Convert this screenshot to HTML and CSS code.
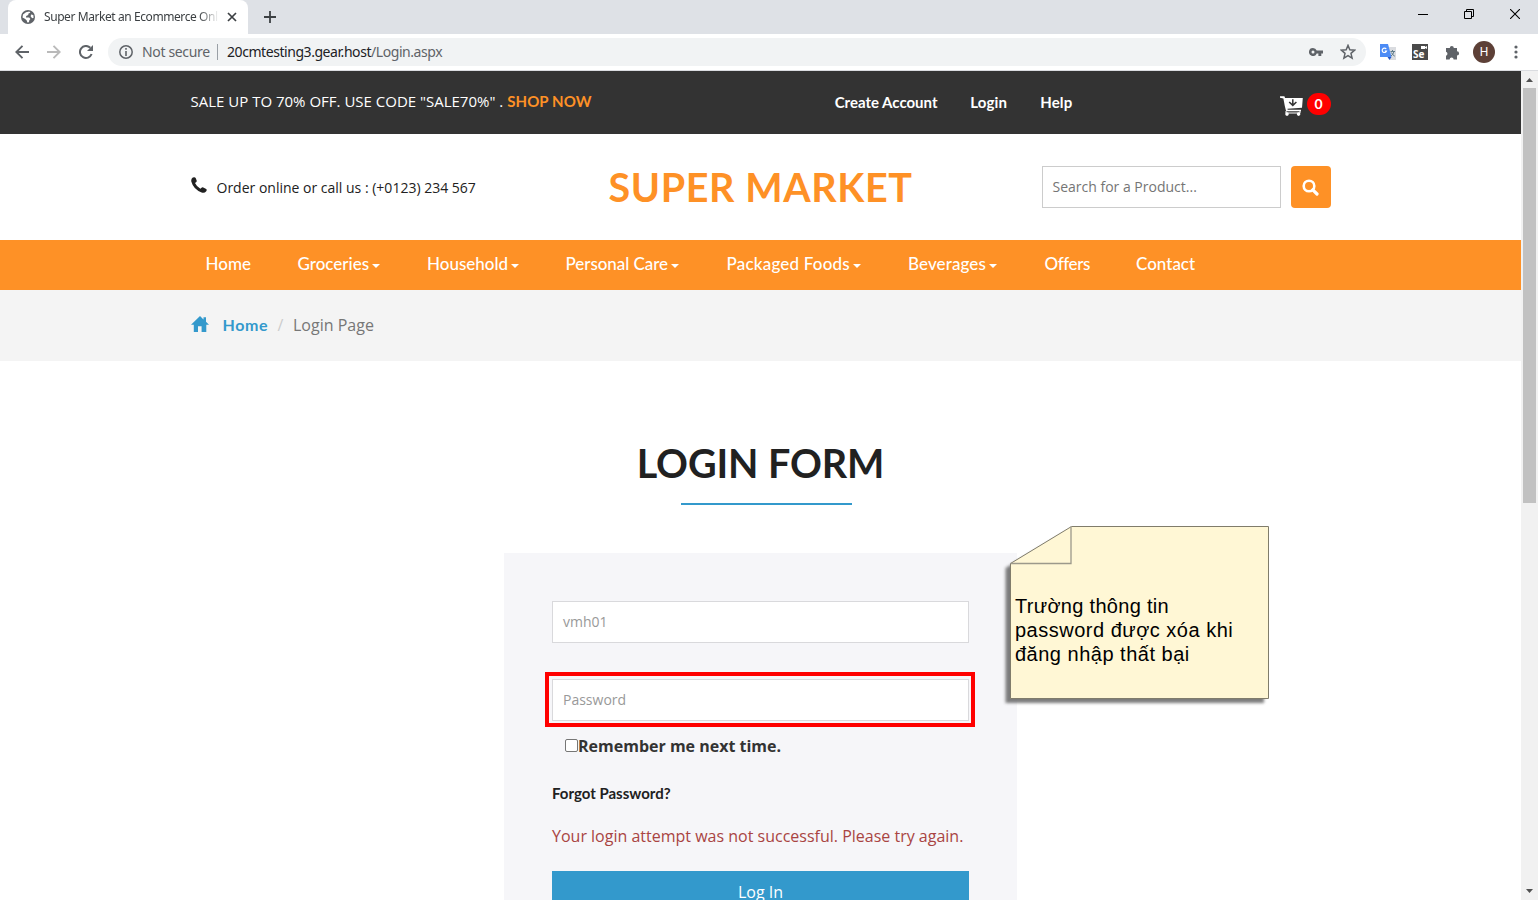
FILE: index.html
```html
<!DOCTYPE html>
<html lang="en">
<head>
<meta charset="utf-8">
<title>Super Market an Ecommerce Online Shopping</title>
<link rel="stylesheet" href="styles.css">
</head>
<body>
<div class="browser">
  <div class="tabstrip">
    <div class="tab">
      <svg class="globe" width="14" height="14" viewBox="0 0 14 14"><circle cx="7" cy="7" r="7" fill="#5f6368"/><path d="M2 4.5 5 2.2 8.3 1.5 9.4 2.7 7.5 3.6 7.2 5 5.2 6 5 7.4 8.2 7.4 9.4 9 8.2 10.4 8 12.3 6.4 12.6 5.6 10.2 3.8 8.8 1.5 7.4ZM10 4.6 12.3 5 12.6 7.8 11.2 8.2 9.7 6.6Z" fill="#fff"/></svg>
      <span class="tab-title">Super Market an Ecommerce Onl</span>
      <svg class="tab-close" width="10" height="10" viewBox="0 0 10 10"><path d="M1 1 9 9M9 1 1 9" stroke="#3c4043" stroke-width="1.7"/></svg>
    </div>
    <svg class="new-tab" width="12" height="12" viewBox="0 0 12 12"><path d="M6 0V12M0 6H12" stroke="#3c4043" stroke-width="1.8"/></svg>
    <div class="window-buttons">
      <svg width="10" height="10" viewBox="0 0 10 10"><path d="M0 5.5H10" stroke="#000"/></svg>
      <svg width="10" height="10" viewBox="0 0 10 10"><path d="M.5 2.5H7.5V9.5H.5ZM2.5 2.5V.5H9.5V7.5H7.5" fill="none" stroke="#000"/></svg>
      <svg width="10" height="10" viewBox="0 0 10 10"><path d="M0 0 10 10M10 0 0 10" stroke="#000" stroke-width="1.1"/></svg>
    </div>
  </div>
  <div class="toolbar">
    <svg class="back" width="14" height="14" viewBox="0 0 14 14"><path d="M14 7H1.5M7.5.8 1.3 7 7.5 13.2" fill="none" stroke="#5f6368" stroke-width="1.9"/></svg>
    <svg class="forward" width="14" height="14" viewBox="0 0 14 14"><path d="M0 7H12.5M6.5.8 12.7 7 6.5 13.2" fill="none" stroke="#bababa" stroke-width="1.9"/></svg>
    <svg class="reload" width="14" height="14" viewBox="0 0 14 14"><path d="M12.6 9A6 6 0 1 1 11.3 2.8" fill="none" stroke="#5f6368" stroke-width="2"/><path d="M14 0V6H8Z" fill="#5f6368"/></svg>
    <div class="address">
      <svg class="info" width="14" height="14" viewBox="0 0 14 14"><circle cx="7" cy="7" r="6.2" fill="none" stroke="#5f6368" stroke-width="1.5"/><path d="M7 3V4.7M7 6V11" stroke="#5f6368" stroke-width="1.6"/></svg>
      <span class="not-secure">Not secure</span>
      <span class="divider"></span>
      <span class="url">20cmtesting3.gear.host<span>/Login.aspx</span></span>
      <svg class="key" width="14" height="8" viewBox="0 0 14 8"><path fill-rule="evenodd" d="M4 0A4 4 0 1 0 7.7 5.4H9.4V8H12.3V5.4H14V2.6H7.7A4 4 0 0 0 4 0ZM4 2.5A1.5 1.5 0 1 1 4 5.5A1.5 1.5 0 1 1 4 2.5Z" fill="#5f6368"/></svg>
      <svg class="star" width="14" height="14" viewBox="0 0 14 14"><path d="M7 1.2 8.6 5 12.8 5.4 9.6 8.2 10.6 12.4 7 10.2 3.4 12.4 4.4 8.2 1.2 5.4 5.4 5Z" fill="none" stroke="#5f6368" stroke-width="1.3"/></svg>
    </div>
    <svg class="translate" width="16" height="16" viewBox="0 0 16 16"><path d="M6 3H16V16H10Z" fill="#dadce0"/><path d="M0 0H8L11.5 13H0Z" fill="#4c8bf5"/><path d="M7.5 13H11.5L9.5 16Z" fill="#2356c5"/><path d="M10.5 7.5H15M12.5 6V7.5M14 7.5Q13.2 10.5 11 12M11.4 8.5Q12.5 11 14.8 12.2" fill="none" stroke="#607d8b"/><path d="M6.2 5A2.2 2.2 0 1 0 6.5 7H4.7" fill="none" stroke="#fff" stroke-width="1.2"/></svg>
    <div class="selenium"><svg width="15" height="6" viewBox="0 0 15 6"><path d="M8 2H12V3L14 2V5L12 4V5H8Z" fill="#fff"/></svg><span>Se</span></div>
    <svg class="puzzle" width="15" height="15" viewBox="0 0 15 15"><path d="M1 3H4.8A2 2 0 1 1 8.8 3H12V6.3A2.1 2.1 0 1 1 12 10.5V14.5H8.6A2 2 0 0 0 4.6 14.5H1V10.8A2.1 2.1 0 0 0 1 6.8Z" fill="#5f6368"/></svg>
    <div class="avatar">H</div>
    <svg class="dots" width="4" height="14" viewBox="0 0 4 14"><g fill="#5f6368"><circle cx="2" cy="2" r="1.6"/><circle cx="2" cy="7" r="1.6"/><circle cx="2" cy="12" r="1.6"/></g></svg>
  </div>
</div>

<div class="viewport">
  <main class="page">
    <div class="topbar"><div class="container topbar-row">
      <p class="promo">SALE UP TO 70% OFF. USE CODE "SALE70%" . <a>SHOP NOW</a></p>
      <nav class="account"><a class="create">Create Account</a><a class="login">Login</a><a class="help">Help</a></nav>
      <svg class="cart" width="23" height="20" viewBox="0 0 23 20"><path d="M0 .2 4.4.2 5.1 2H22.8L22 11.8 7.5 12.8 7.7 13.8H21V15.2H6.1L4.8 10 3.4 2.6 0 1.8Z" fill="#fff"/><path d="M12.8 3.2V9M9.2 6 12.8 9.4 16.4 6" fill="none" stroke="#333" stroke-width="1.5"/><path d="M6 15V17H20V15" fill="none" stroke="#fff"/><circle cx="7" cy="18.1" r="1.8" fill="#fff"/><circle cx="18.6" cy="18.1" r="1.8" fill="#fff"/></svg>
      <span class="count">0</span>
    </div></div>

    <header class="masthead"><div class="container masthead-row">
      <svg class="phone" width="16" height="16" viewBox="0 0 16 16"><path d="M1.8.5Q4-.5 4.8 1.2L5.8 4Q5.8 5 4 6.1Q5.5 9.5 9.4 11.8Q10.8 10 11.8 10.3L15.2 12Q16.3 12.9 15 14.4Q13.5 16.3 10.6 15.4Q2.4 12.4.4 4.8Q-.3 1.8 1.8.5Z" fill="#212121"/></svg>
      <span class="call">Order online or call us : (+0123) 234 567</span>
      <h1 class="brand">SUPER MARKET</h1>
      <div class="search">Search for a Product...</div>
      <div class="search-button"><svg width="17" height="17" viewBox="0 0 17 17"><circle cx="7" cy="7" r="5.3" fill="none" stroke="#fff" stroke-width="2.6"/><path d="M10.8 10.8 15 15" stroke="#fff" stroke-width="3.2" stroke-linecap="round"/></svg></div>
    </div></header>

    <nav class="menu"><div class="container menu-row">
      <a class="m-home">Home</a>
      <a class="m-groceries drop">Groceries</a>
      <a class="m-household drop">Household</a>
      <a class="m-care drop">Personal Care</a>
      <a class="m-foods drop">Packaged Foods</a>
      <a class="m-beverages drop">Beverages</a>
      <a class="m-offers">Offers</a>
      <a class="m-contact">Contact</a>
    </div></nav>

    <div class="breadcrumbs"><div class="container crumbs-row">
      <svg width="18" height="16" viewBox="0 0 18 16"><path d="M9 0 12.5 3.4V1.2H15V5.8L18 8.8H15.3V16H10.6V10.3H7V16H2.8V8.8H0Z" fill="#3399cc"/></svg>
      <a>Home</a><span class="slash">/</span><span class="current">Login Page</span>
    </div></div>

    <section class="login-section">
      <h2 class="heading">LOGIN FORM</h2>
      <div class="rule"></div>
      <div class="panel">
        <div class="field">vmh01</div>
        <div class="highlight"><div class="field">Password</div></div>
        <label class="remember"><span class="box"></span>Remember me next time.</label>
        <a class="forgot">Forgot Password?</a>
        <p class="error">Your login attempt was not successful. Please try again.</p>
        <div class="submit">Log In</div>
      </div>
    </section>
  </main>
  <aside class="scrollbar">
    <svg class="arrow-up" width="7" height="4" viewBox="0 0 7 4"><path d="M0 4 3.5 0 7 4Z" fill="#505050"/></svg>
    <div class="thumb"></div>
    <svg class="arrow-down" width="7" height="4" viewBox="0 0 7 4"><path d="M0 0 3.5 4 7 0Z" fill="#505050"/></svg>
  </aside>
</div>

<div class="note">
  <svg width="275" height="190" viewBox="0 0 275 190">
    <defs><filter id="soft" x="-10%" y="-10%" width="120%" height="120%"><feGaussianBlur stdDeviation="1.8"/></filter></defs>
    <path d="M5.5 43 66.5 7H264V178H5.5Z" fill="#666" opacity=".85" filter="url(#soft)"/>
    <path d="M10.5 38.5 71.5 1.5H268.5V173.5H10.5Z" fill="#fff7d5" stroke="#807c6b"/>
    <path d="M10.5 38.5H71V1.5" fill="none" stroke="#9c998b" stroke-width="1.3"/>
  </svg>
  <p class="note-text">Trường thông tin<br>password được xóa khi<br>đăng nhập thất bại</p>
</div>
</body>
</html>
```
FILE: styles.css
```css
* { box-sizing: border-box; }
body { margin: 0; height: 900px; overflow: hidden; position: relative; background: #fff; font-family: "Open Sans", sans-serif; white-space: nowrap; }
svg { display: block; flex: none; }
p, h1, h2 { margin: 0; }

/* Browser frame */
.tabstrip { height: 34px; background: #dee1e6; display: flex; align-items: flex-start; }
.tab { margin-left: 8px; width: 240px; height: 34px; background: radial-gradient(circle, #fff, #fff); border-radius: 8px 8px 0 0; display: flex; align-items: center; padding-left: 13px; }
.tab-title { width: 175px; margin-left: 9px; overflow: hidden; font: 12px/18px "Noto Sans", sans-serif; letter-spacing: -.42px; color: #3c4043; -webkit-mask-image: linear-gradient(90deg, #000 155px, transparent 175px); mask-image: linear-gradient(90deg, #000 155px, transparent 175px); }
.tab-close { margin-left: 8px; }
.new-tab { margin: 11px 0 0 16px; }
.window-buttons { display: flex; gap: 36px; margin: 9px 18px 0 auto; }
.toolbar { height: 37px; border-bottom: 1px solid #dadce0; display: flex; align-items: center; padding-left: 15px; }
.forward { margin-left: 18px; }
.reload { margin-left: 18px; }
.address { width: 1258px; height: 28px; margin-left: 15px; padding: 0 10px 0 11px; border-radius: 14px; background: #f1f3f4; display: flex; align-items: center; font: 14px/20px "Noto Sans", sans-serif; color: #202124; }
.not-secure { margin-left: 9px; width: 68px; color: #5f6368; letter-spacing: -.35px; }
.divider { width: 1px; height: 16px; margin: 0 9px 0 7px; background: #9aa0a6; }
.url { letter-spacing: -.44px; }
.url span { color: #5f6368; }
.key { margin-left: auto; }
.star { margin: 0 0 0 17px; width: 16px; height: 16px; }
.translate { margin-left: 14px; }
.selenium { width: 16px; height: 16px; margin-left: 16px; background: #4a4a4a; color: #fff; font: bold 10px/9px "Open Sans", sans-serif; padding-left: 1px; }
.selenium span { display: block; }
.puzzle { margin-left: 17px; }
.avatar { width: 22px; height: 22px; margin-left: 13px; border-radius: 50%; background: #5d4037; color: #fff; font: 12px/22px Roboto, sans-serif; text-align: center; }
.dots { margin-left: 19px; }

/* Page */
.viewport { display: flex; height: 829px; overflow: hidden; }
.page { width: 1521px; }
.container { width: 1140px; margin-left: 190.5px; display: flex; }
.topbar { height: 63px; background: #333; color: #fff; }
.promo { width: 645px; font-size: 15px; line-height: 20px; padding-top: 20px; }
.promo a { color: #fe9126; font: bold 15px/20px Lato, sans-serif; letter-spacing: .1px; }
.account { display: flex; width: 446px; font: bold 15px/20px Lato, sans-serif; padding-top: 21px; }
.create { width: 135.5px; }
.login { width: 70px; letter-spacing: .2px; }
.help { letter-spacing: .2px; }
.cart { margin-top: 25px; }
.count { width: 24px; height: 22px; margin: 22px 0 0 3.5px; border-radius: 11px; background: #f00; font: bold 14px/22px Lato, sans-serif; text-align: center; }
.masthead { height: 106px; padding-top: 32px; }
.phone { margin: 11px 10px 0 0; }
.call { width: 392px; font-size: 14px; line-height: 44px; height: 42px; color: #212121; }
.brand { width: 433px; font: bold 39.5px/41px Lato, sans-serif; letter-spacing: .6px; color: #fe9126; }
.search { width: 239px; height: 42px; border: 1px solid #ccc; padding-left: 10px; font-size: 14px; line-height: 40px; color: #757575; }
.search-button { width: 40px; height: 42px; margin-left: 10px; border-radius: 4px; background: #fe9126; display: grid; place-items: center; }
.menu { height: 50px; background: #fe9126; color: #fff; font: 500 17px/48px Lato, sans-serif; }
.menu-row { padding-left: 15px; }
.drop { display: flex; align-items: center; }
.drop::after { content: ""; margin: 4px 0 0 3px; border: 4px solid transparent; border-top-color: #fff; border-bottom: 0; }
.m-home { width: 92px; }
.m-groceries { width: 129.5px; }
.m-household { width: 138.5px; }
.m-care { width: 161px; letter-spacing: -.05px; }
.m-foods { width: 181.5px; letter-spacing: .2px; }
.m-beverages { width: 136.5px; letter-spacing: .1px; }
.m-offers { width: 91.5px; letter-spacing: -.4px; }
.breadcrumbs { height: 71px; background: #f4f4f4; font-size: 16px; line-height: 70px; }
.crumbs-row svg { margin-top: 26px; }
.crumbs-row a { width: 55px; margin-left: 14px; font-family: Lato, sans-serif; font-weight: bold; letter-spacing: .6px; color: #3399cc; }
.slash { width: 15.5px; color: #ccc; }
.current { color: #777; }

/* Login form */
.login-section { display: flex; flex-direction: column; align-items: center; padding-top: 77px; }
.heading { font: bold 39.5px/50px Lato, sans-serif; letter-spacing: -.1px; color: #212121; }
.rule { width: 171px; height: 2px; margin: 15px 0 48px 12px; background: #3399cc; }
.panel { width: 513px; height: 400px; padding: 48px; background: #f6f6f9; }
.field { width: 417px; height: 42px; padding-left: 10px; border: 1px solid #d9d9dc; background: #fff; color: #999; font-size: 14px; line-height: 40px; }
.highlight { width: 430px; height: 55px; margin: 29px 0 0 -7px; padding: 3px; border: 4px solid #f00; }
.remember { display: flex; align-items: center; margin: 7px 0 0 13px; color: #333; font-size: 16px; font-weight: bold; line-height: 24px; }
.box { width: 13px; height: 13px; margin-bottom: 2px; border: 1px solid #767676; border-radius: 2px; background: #fff; }
.forgot { display: block; margin-top: 25px; color: #212121; font: bold 15px/20px Lato, sans-serif; }
.error { margin-top: 21px; color: #a94442; font-size: 16px; line-height: 24px; }
.submit { height: 42px; margin-top: 23px; background: #3399cc; color: #fff; text-align: center; font-size: 16px; line-height: 42px; }

.scrollbar { width: 17px; background: #f1f1f1; display: flex; flex-direction: column; align-items: center; padding: 7px 0; }
.thumb { width: 13px; height: 415px; margin-top: 6px; background: #c1c1c1; }
.arrow-down { margin-top: auto; }

/* Sticky annotation laid over the page */
.note { position: absolute; left: 1000px; top: 525px; width: 275px; height: 190px; }
.note-text { position: absolute; left: 15px; top: 69px; color: #000; font: 20px/24px "Liberation Sans", sans-serif; letter-spacing: .5px; }
.note-text::first-line { letter-spacing: .3px; }
```
